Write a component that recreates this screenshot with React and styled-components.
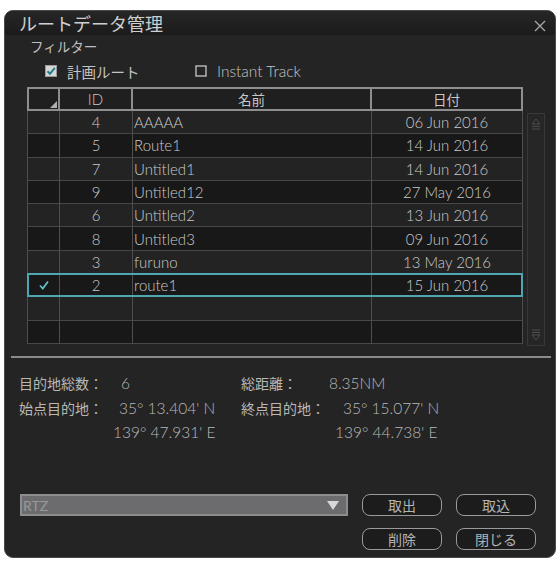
import React from "react";
import styled, { createGlobalStyle } from "styled-components";

const Global = createGlobalStyle`
  html, body { margin: 0; padding: 0; background: #ffffff; }
  body { font-family: Lato, "Noto Sans CJK JP", sans-serif; }
  * { box-sizing: border-box; }
`;

const FONT = `Lato, "Noto Sans CJK JP", sans-serif`;
const JFONT = `"Noto Sans CJK JP", Lato, sans-serif`;

const Window = styled.div`
  margin: 10px 0 0 4px;
  width: 552px;
  height: 548px;
  background: #242424;
  border: 1px solid #4a4a4a;
  border-radius: 9px;
  display: flex;
  flex-direction: column;
  overflow: hidden;
  color: #c4c4c4;
`;

const TitleBar = styled.div`
  height: 24px;
  flex: none;
  display: flex;
  align-items: center;
  justify-content: space-between;
  padding: 0 8px 0 14px;
  background: linear-gradient(#262626, #1b1b1b);
`;

const Title = styled.div`
  font-family: ${JFONT};
  font-size: 18px;
  line-height: 22px;
  color: #cfcfcf;
`;

const Close = styled.div`
  width: 14px;
  height: 14px;
  display: flex;
  align-items: center;
  justify-content: center;
  margin-top: 6px;
`;

const FilterLabel = styled.div`
  font-family: ${JFONT};
  font-size: 13.5px;
  line-height: 16px;
  margin: 3px 0 0 25px;
  color: #c0c0c0;
`;

const FilterRow = styled.div`
  display: flex;
  align-items: center;
  height: 16px;
  margin: 9px 0 0 40px;
`;

const CheckItem = styled.label`
  display: flex;
  align-items: center;
  gap: 10px;
  width: ${(p) => p.$w}px;
  font-family: ${(p) => (p.$jp ? JFONT : FONT)};
  font-size: ${(p) => (p.$jp ? 14.5 : 15.5)}px;
  font-weight: ${(p) => (p.$jp ? 400 : 300)};
  color: #c4c4c4;
`;

const TableArea = styled.div`
  display: flex;
  margin: 8px 0 0 22px;
  gap: 4px;
`;

const Table = styled.div`
  width: 496px;
  display: grid;
  grid-template-columns: 33px 73px 239px 151px;
  grid-auto-rows: 23.3px;
  grid-template-rows: 24px;
  position: relative;
`;

const HeadCell = styled.div`
  background: #1f1f1f;
  border: 2px solid #8e8e8e;
  margin-left: ${(p) => (p.$first ? 0 : -2)}px;
  display: flex;
  align-items: center;
  justify-content: center;
  font-family: ${(p) => (p.$latin ? FONT : JFONT)};
  font-size: ${(p) => (p.$latin ? 15 : 13.5)}px;
  font-weight: ${(p) => (p.$latin ? 300 : 400)};
  color: #c8c8c8;
  position: relative;
`;

const Corner = styled.div`
  position: absolute;
  right: 1px;
  bottom: 1px;
  width: 0;
  height: 0;
  border-left: 7px solid transparent;
  border-bottom: 7px solid #b0b0b0;
`;

const Cell = styled.div`
  background: ${(p) => (p.$dark ? "#181818" : "#232323")};
  border-right: 1px solid #4e4e4e;
  border-bottom: 1px solid #474747;
  border-left: ${(p) => (p.$first ? "1px solid #4e4e4e" : "none")};
  display: flex;
  align-items: center;
  justify-content: ${(p) => p.$align || "center"};
  padding-left: ${(p) => (p.$align === "flex-start" ? 1 : 0)}px;
  font-family: ${FONT};
  font-size: 15px;
  font-weight: 300;
  color: #cacaca;
  white-space: nowrap;
  overflow: hidden;
`;

const SelBox = styled.div`
  position: absolute;
  left: 0;
  right: 0;
  top: ${(p) => p.$top}px;
  height: 24px;
  border: 2px solid #4fa6b2;
  pointer-events: none;
`;

const Scrollbar = styled.div`
  margin-top: 26px;
  width: 18px;
  height: 233px;
  background: #262626;
  border: 1px solid #383838;
  display: flex;
  flex-direction: column;
  justify-content: space-between;
  align-items: center;
  padding: 3px 0;
`;

const Separator = styled.div`
  height: 2px;
  background: #8a8a8a;
  margin: 10px 4px 0 6px;
  flex: none;
`;

const Info = styled.div`
  display: grid;
  grid-template-columns: 100px 122px 100px auto;
  grid-auto-rows: 24.5px;
  margin: 13px 0 0 14px;
  align-items: center;
  color: #b8b8b8;
`;

const Label = styled.div`
  font-family: ${JFONT};
  font-size: 14px;
  white-space: nowrap;
`;

const Value = styled.div`
  font-family: ${FONT};
  font-size: 15.5px;
  font-weight: 300;
  white-space: nowrap;
  margin-left: ${(p) => p.$dx || 0}px;
`;

const Bottom = styled.div`
  margin-top: auto;
  padding: 0 0 7px 15px;
  display: grid;
  grid-template-columns: 328px 80px 80px;
  grid-auto-rows: 22px;
  column-gap: 14px;
  row-gap: 12px;
`;

const Select = styled.div`
  grid-column: 1;
  grid-row: 1;
  background: #6c6c6f;
  border: 2px solid #8d8d90;
  display: flex;
  align-items: center;
  justify-content: space-between;
  padding: 0 7px 0 1px;
  font-family: ${FONT};
  font-size: 14px;
  color: #98989a;
`;

const Arrow = styled.div`
  width: 0;
  height: 0;
  border-left: 6px solid transparent;
  border-right: 6px solid transparent;
  border-top: 9px solid #d8d8d8;
`;

const Button = styled.button`
  grid-column: ${(p) => p.$col};
  grid-row: ${(p) => p.$row};
  background: #1c1c1c;
  border: 1.5px solid #9a9a9a;
  border-radius: 8px;
  color: #b4b4b4;
  font-family: ${JFONT};
  font-size: 14px;
  padding: 0;
  display: flex;
  align-items: center;
  justify-content: center;
`;

const rows = [
  ["4", "AAAAA", "06 Jun 2016"],
  ["5", "Route1", "14 Jun 2016"],
  ["7", "Untitled1", "14 Jun 2016"],
  ["9", "Untitled12", "27 May 2016"],
  ["6", "Untitled2", "13 Jun 2016"],
  ["8", "Untitled3", "09 Jun 2016"],
  ["3", "furuno", "13 May 2016"],
  ["2", "route1", "15 Jun 2016", true],
  ["", "", ""],
  ["", "", ""],
];

const CheckedBox = () => (
  <svg width="12" height="12" viewBox="0 0 12 12">
    <rect x="0.5" y="0.5" width="11" height="11" fill="#d6d6d6" stroke="#9a9a9a" />
    <path d="M2.5 6.2 L5 8.8 L9.8 2.8" fill="none" stroke="#1f7f86" strokeWidth="2" />
  </svg>
);

const EmptyBox = () => (
  <svg width="12" height="12" viewBox="0 0 12 12">
    <rect x="1" y="1" width="10" height="10" fill="none" stroke="#bdbdbd" strokeWidth="1.4" />
  </svg>
);

const Tick = () => (
  <svg width="12" height="12" viewBox="0 0 12 12">
    <path d="M2 6.5 L4.8 9.5 L10 2.5" fill="none" stroke="#5cc0c8" strokeWidth="1.8" />
  </svg>
);

const ScrollUp = () => (
  <svg width="12" height="14" viewBox="0 0 12 14">
    <path d="M6 2 L10 7 L2 7 Z" fill="none" stroke="#4e4e4e" strokeWidth="1" />
    <path d="M2 9.5 H10 M2 12 H10" stroke="#4e4e4e" strokeWidth="1" />
  </svg>
);

const ScrollDown = () => (
  <svg width="12" height="14" viewBox="0 0 12 14">
    <path d="M2 2 H10 M2 4.5 H10" stroke="#4e4e4e" strokeWidth="1" />
    <path d="M2 7 L10 7 L6 12 Z" fill="none" stroke="#4e4e4e" strokeWidth="1" />
  </svg>
);

export default function App() {
  const selIndex = rows.findIndex((r) => r[3]);
  return (
    <>
      <Global />
      <Window>
        <TitleBar>
          <Title>ルートデータ管理</Title>
          <Close>
            <svg width="12" height="12" viewBox="0 0 12 12">
              <path d="M1 1 L11 11 M11 1 L1 11" stroke="#a8a8a8" strokeWidth="1.3" />
            </svg>
          </Close>
        </TitleBar>
        <FilterLabel>フィルター</FilterLabel>
        <FilterRow>
          <CheckItem $w={150} $jp>
            <CheckedBox />
            <span>計画ルート</span>
          </CheckItem>
          <CheckItem $w={150}>
            <EmptyBox />
            <span>Instant Track</span>
          </CheckItem>
        </FilterRow>
        <TableArea>
          <Table>
            <HeadCell $first>
              <Corner />
            </HeadCell>
            <HeadCell $latin>ID</HeadCell>
            <HeadCell>名前</HeadCell>
            <HeadCell>日付</HeadCell>
            {rows.map((r, i) => {
              const dark = i % 2 === 1;
              return (
                <React.Fragment key={i}>
                  <Cell $first $dark={dark}>{r[3] ? <Tick /> : null}</Cell>
                  <Cell $dark={dark}>{r[0]}</Cell>
                  <Cell $dark={dark} $align="flex-start">{r[1]}</Cell>
                  <Cell $dark={dark}>{r[2]}</Cell>
                </React.Fragment>
              );
            })}
            <SelBox $top={24 + selIndex * 23.3 - 1} />
          </Table>
          <Scrollbar>
            <ScrollUp />
            <ScrollDown />
          </Scrollbar>
        </TableArea>
        <Separator />
        <Info>
          <Label>目的地総数：</Label>
          <Value $dx={2}>6</Value>
          <Label>総距離：</Label>
          <Value $dx={-12}>8.35NM</Value>
          <Label>始点目的地：</Label>
          <Value>35° 13.404' N</Value>
          <Label>終点目的地：</Label>
          <Value $dx={2}>35° 15.077' N</Value>
          <span />
          <Value $dx={-6}>139° 47.931' E</Value>
          <span />
          <Value $dx={-6}>139° 44.738' E</Value>
        </Info>
        <Bottom>
          <Select>
            <span>RTZ</span>
            <Arrow />
          </Select>
          <Button $col={2} $row={1}>取出</Button>
          <Button $col={3} $row={1}>取込</Button>
          <Button $col={2} $row={2}>削除</Button>
          <Button $col={3} $row={2}>閉じる</Button>
        </Bottom>
      </Window>
    </>
  );
}
